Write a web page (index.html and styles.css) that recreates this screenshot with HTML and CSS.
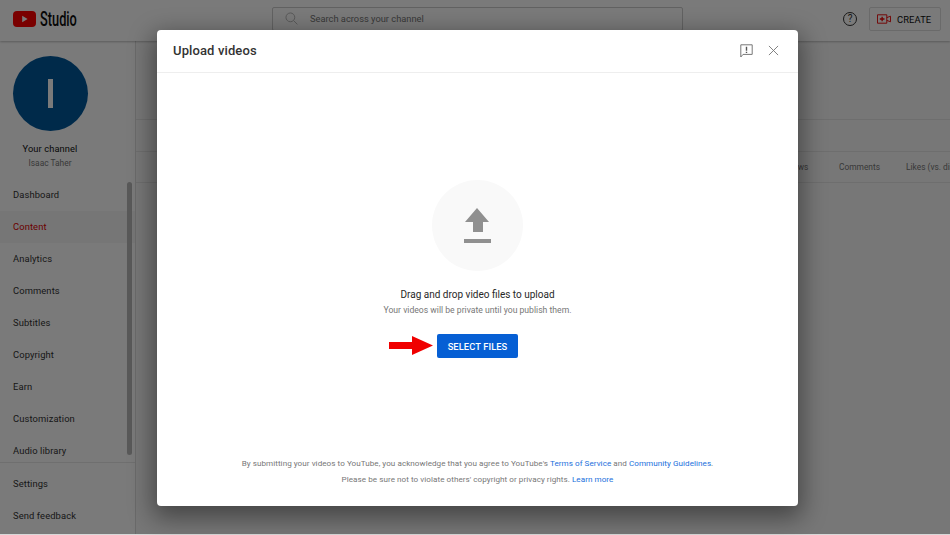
FILE: index.html
```html
<!DOCTYPE html>
<html lang="en">
<head>
<meta charset="utf-8">
<title>Upload videos</title>
<link rel="stylesheet" href="styles.css">
</head>
<body>
<div class="app">
  <header class="topbar">
    <div class="logo">
      <svg class="yt" viewBox="0 0 23 16"><rect width="23" height="16" rx="4" fill="#ff0000"/><path d="M9.2 4.8v6.4l5.4-3.2z" fill="#fff"/></svg>
      <span class="logo-text">Studio</span>
    </div>
    <div class="search">
      <svg class="search-ico" viewBox="0 0 16 16"><circle cx="6.6" cy="6.6" r="5.4"/><path d="M10.6 10.6l4.6 4.6"/></svg>
      <span>Search across your channel</span>
    </div>
    <div class="top-actions">
      <div class="help">?</div>
      <div class="create">
        <svg class="create-ico" viewBox="0 0 15 10"><path d="M.5.5h10v9H.5zM10.500 3.500l4-1.500v6l-4-1.500"/><path class="plus" d="M5.500 2.500v5M3 5h5"/></svg>
        <span>CREATE</span>
      </div>
    </div>
  </header>
  <div class="body">
    <aside class="sidebar">
      <div class="profile">
        <div class="avatar"><span class="avatar-bar"></span></div>
        <div class="your-channel">Your channel</div>
        <div class="owner">Isaac Taher</div>
      </div>
      <div class="nav-wrap">
        <nav class="nav">
          <div class="nav-item">Dashboard</div>
          <div class="nav-item active">Content</div>
          <div class="nav-item">Analytics</div>
          <div class="nav-item">Comments</div>
          <div class="nav-item">Subtitles</div>
          <div class="nav-item">Copyright</div>
          <div class="nav-item">Earn</div>
          <div class="nav-item">Customization</div>
          <div class="nav-item">Audio library</div>
        </nav>
        <div class="scrollbar"></div>
      </div>
      <div class="nav-foot">
        <div class="nav-item">Settings</div>
        <div class="nav-item">Send feedback</div>
      </div>
    </aside>
    <main class="content">
      <div class="c-head"></div>
      <div class="c-tabs"></div>
      <div class="c-cols"><span class="col-views">Views</span><span class="col-comments">Comments</span><span class="col-likes">Likes (vs. dislikes)</span></div>
    </main>
  </div>
</div>
<div class="scrim"></div>
<section class="dialog">
  <div class="d-head">
    <h1>Upload videos</h1>
    <svg class="d-flag" viewBox="0 0 13 14"><path d="M.8.8h11.400v9.600H3L.8 13z"/><path class="mark" d="M6.500 2.800v4M6.500 7.800v1.200"/></svg>
    <svg class="d-close" viewBox="0 0 12 12"><path d="M1 1l10 10M11 1L1 11"/></svg>
  </div>
  <div class="d-body">
    <div class="drop-circle">
      <svg class="upload" viewBox="0 0 27 35"><path d="M13 0L25 14H19V24H9V14H1Z"/><rect y="31" width="27" height="4"/></svg>
    </div>
    <p class="drop-title">Drag and drop video files to upload</p>
    <p class="drop-sub">Your videos will be private until you publish them.</p>
    <div class="select-row">
      <svg class="arrow" viewBox="0 0 44 19"><path d="M0 6H23V0L44 9.500 23 19V13H0Z"/></svg>
      <button class="select-btn">SELECT FILES</button>
    </div>
  </div>
  <footer class="d-foot">
    <p>By submitting your videos to YouTube, you acknowledge that you agree to YouTube's <a>Terms of Service</a> and <a>Community Guidelines</a>.</p>
    <p>Please be sure not to violate others' copyright or privacy rights. <a>Learn more</a></p>
  </footer>
</section>
</body>
</html>
```
FILE: styles.css
```css
* { box-sizing: border-box; }
html, body { margin: 0; height: 100%; }
body {
  width: 950px; height: 535px; overflow: hidden; position: relative;
  font-family: Roboto, "Liberation Sans", sans-serif; background: #d8d8d8; color: #0d0d0d;
}
.app { height: 534px; display: flex; flex-direction: column; background: #f9f9f9; }
.topbar {
  height: 41px; flex: none; display: flex; align-items: center; background: #fff;
  padding: 0 9px 0 13px; box-shadow: 0 1px 2px rgba(0,0,0,.25); position: relative;
}
.logo { display: flex; align-items: center; gap: 4px; width: 259px; margin-top: -3px; }
.yt { width: 23px; height: 16px; }
.logo-text { font-size: 20px; line-height: 20px; font-weight: 500; transform: scaleX(.64); transform-origin: left; }
.search {
  width: 411px; height: 24px; margin-top: -4px; border: 1px solid #ccc; border-radius: 2px;
  display: flex; align-items: center; font-size: 9.3px; color: #777; padding-left: 12px; gap: 12px;
}
.search-ico { width: 13px; height: 13px; fill: none; stroke: #aaa; stroke-width: 1; }
.top-actions { margin-left: auto; display: flex; align-items: center; gap: 12px; margin-top: -3px; }
.help { width: 14px; height: 14px; border: 1px solid #333; border-radius: 50%; font-size: 10px; line-height: 12px; text-align: center; color: #333; }
.create {
  width: 72px; height: 24px; border: 1px solid #ddd; border-radius: 2px; display: flex; align-items: center;
  padding-left: 7px; gap: 6px; font-size: 9.4px; font-weight: 400; letter-spacing: .1px;
}
.create-ico { width: 14px; height: 10px; fill: none; stroke: #e00; stroke-width: 1; }
.create-ico .plus { stroke-width: 1.4; }
.body { flex: 1; display: flex; min-height: 0; }
.sidebar { width: 136px; flex: none; background: #fff; border-right: 1px solid #ddd; display: flex; flex-direction: column; }
.profile { height: 138px; flex: none; padding: 15px 35px 0 0; display: flex; flex-direction: column; align-items: center; }
.avatar { width: 75px; height: 75px; border-radius: 50%; background: #00589c; display: flex; align-items: center; justify-content: center; }
.avatar-bar { width: 5px; height: 29px; background: #fff; }
.your-channel { font-size: 9.3px; font-weight: 400; margin-top: 12px; line-height: 11px; letter-spacing: .1px; color: #111; }
.owner { font-size: 8.4px; color: #777; margin-top: 4px; line-height: 10px; }
.nav-wrap { position: relative; height: 283px; flex: none; }
.nav { display: flex; flex-direction: column; }
.nav-item { height: 32px; line-height: 32px; padding-left: 13px; font-size: 9.4px; font-weight: 400; color: #333; letter-spacing: .1px; }
.nav-item.active { color: #e00000; background: #f7f7f7; }
.scrollbar { position: absolute; top: 3px; right: 3px; width: 5px; height: 273px; border-radius: 3px; background: #bbb; }
.nav-foot { border-top: 1px solid #e8e8e8; padding-top: 5px; }
.content { flex: 1; display: flex; flex-direction: column; }
.c-head { height: 79px; flex: none; border-bottom: 1px solid #e6e6e6; }
.c-tabs { height: 32px; flex: none; border-bottom: 1px solid #e6e6e6; }
.c-cols { height: 31px; flex: none; border-bottom: 1px solid #e6e6e6; position: relative; overflow: hidden; font-size: 8.4px; font-weight: 400; color: #777; }
.c-cols span { position: absolute; top: 10px; white-space: nowrap; }
.col-views { left: 650px; }
.col-comments { left: 703px; }
.col-likes { left: 770px; }
.scrim { position: absolute; inset: 0 0 1px 0; background: rgba(0,0,0,.52); }
.dialog {
  position: absolute; left: 157px; top: 30px; width: 641px; height: 476px;
  background: #fff; border-radius: 4px; display: flex; flex-direction: column;
  box-shadow: 0 8px 24px 4px rgba(0,0,0,.42);
}
.d-head { height: 43px; flex: none; border-bottom: 1px solid #eee; display: flex; align-items: center; padding: 0 19px 1px 16px; }
.d-head h1 { margin: 0; font-size: 13px; font-weight: 500; color: #333; flex: 1; letter-spacing: .12px; }
.d-flag { width: 13px; height: 14px; fill: none; stroke: #777; stroke-width: 1; margin-right: 15px; }
.d-flag .mark { stroke-width: 1.4; stroke: #555; }
.d-close { width: 11px; height: 11px; fill: none; stroke: #777; stroke-width: 1; }
.d-body { flex: 1; display: flex; flex-direction: column; align-items: center; padding-top: 107px; }
.drop-circle { width: 91px; height: 91px; border-radius: 50%; background: #f9f9f9; display: flex; align-items: center; justify-content: center; }
.upload { width: 27px; height: 35px; fill: #909090; }
.drop-title { margin: 17px 0 0; font-size: 10px; line-height: 14px; color: #282828; }
.drop-sub { margin: 2px 0 0; font-size: 8.650px; line-height: 12px; color: #777; }
.select-row { position: relative; margin-top: 18px; }
.select-btn {
  width: 81px; height: 24px; border: 0; border-radius: 2px; background: #065fd4; color: #fff; padding: 0;
  font: 500 9.3px Roboto, "Liberation Sans", sans-serif; letter-spacing: .1px; display: block;
}
.arrow { position: absolute; left: -48px; top: 2px; width: 44px; height: 19px; fill: #f00000; }
.d-foot { flex: none; height: 51px; text-align: center; font-size: 8.1px; line-height: 16px; color: #777; letter-spacing: .05px; }
.d-foot p { margin: 0; }
.d-foot a { color: #1a6fdc; }
```
